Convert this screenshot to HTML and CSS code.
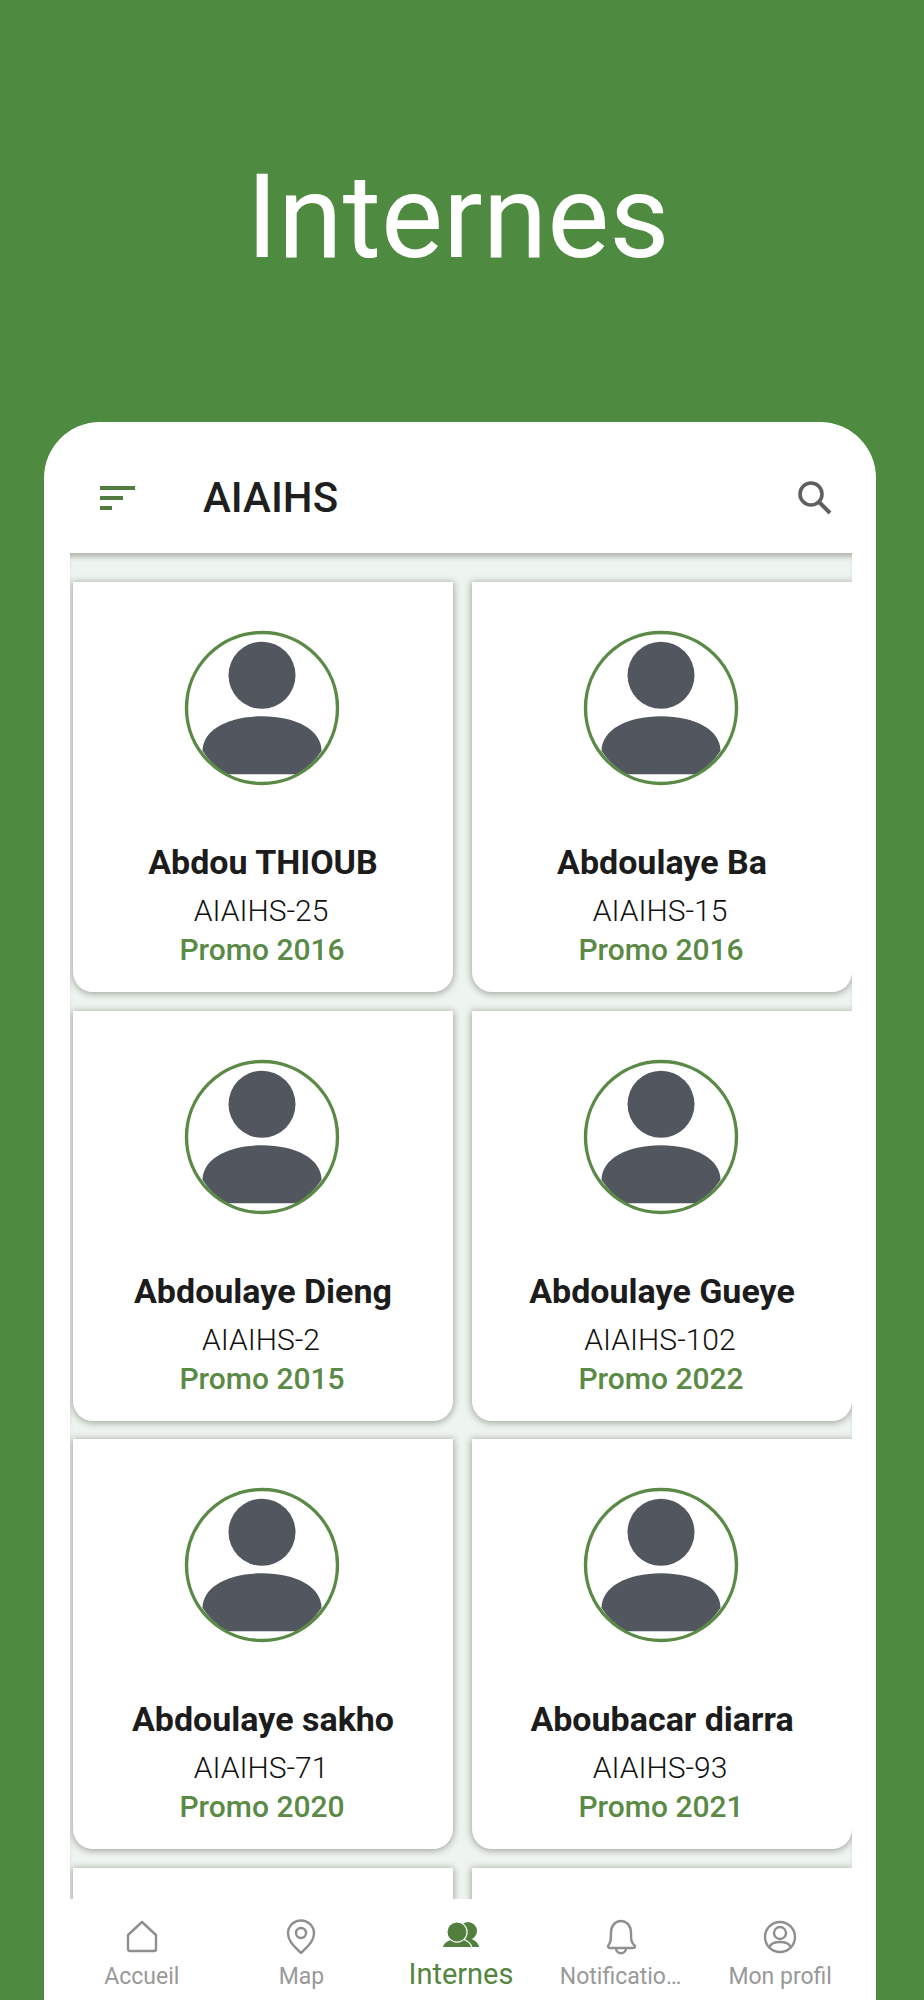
FILE: index.html
```html
<!DOCTYPE html>
<html lang="en">
<head>
    <meta charset="UTF-8">
    <meta name="viewport" content="width=device-width, initial-scale=1.0">
    <title>Internes</title>
    <link rel="stylesheet" href="styles.css">
</head>
<body>
    <svg class="defs" width="0" height="0">
        <symbol id="avatar" viewBox="0 0 156 156">
            <circle cx="78" cy="45.3" r="33.5" fill="#52565e"/>
            <path d="M18.5 121C18.5 100 44 86.3 78 86.3S137.5 100 137.5 121A75 75 0 0 1 113 144.3H43A75 75 0 0 1 18.5 121Z" fill="#52565e"/>
            <circle cx="78" cy="78" r="75.5" fill="none" stroke="#5b8a47" stroke-width="3.4"/>
        </symbol>
    </svg>

    <div class="hero">Internes</div>

    <div class="panel">
        <div class="topbar">
            <svg class="menu-icon" width="36" height="26" viewBox="0 0 36 26">
                <path d="M0 3H35M0 13H23M0 23H12" fill="none" stroke="#527c3f" stroke-width="4"/>
            </svg>
            <div class="topbar-title">AIAIHS</div>
            <svg class="search-icon" width="38" height="38" viewBox="0 0 38 38">
                <circle cx="15" cy="15" r="11" fill="none" stroke="#5f5f5f" stroke-width="3.6"/>
                <path d="M23 23L34 34" fill="none" stroke="#5f5f5f" stroke-width="4"/>
            </svg>
        </div>

        <div class="list">
            <div class="grid">
                <div class="card">
                    <svg class="avatar"><use href="#avatar"/></svg>
                    <div class="name">Abdou THIOUB</div>
                    <div class="code">AIAIHS-25</div>
                    <div class="promo">Promo 2016</div>
                </div>
                <div class="card">
                    <svg class="avatar"><use href="#avatar"/></svg>
                    <div class="name">Abdoulaye Ba</div>
                    <div class="code">AIAIHS-15</div>
                    <div class="promo">Promo 2016</div>
                </div>
                <div class="card">
                    <svg class="avatar"><use href="#avatar"/></svg>
                    <div class="name">Abdoulaye Dieng</div>
                    <div class="code">AIAIHS-2</div>
                    <div class="promo">Promo 2015</div>
                </div>
                <div class="card">
                    <svg class="avatar"><use href="#avatar"/></svg>
                    <div class="name">Abdoulaye Gueye</div>
                    <div class="code">AIAIHS-102</div>
                    <div class="promo">Promo 2022</div>
                </div>
                <div class="card">
                    <svg class="avatar"><use href="#avatar"/></svg>
                    <div class="name">Abdoulaye sakho</div>
                    <div class="code">AIAIHS-71</div>
                    <div class="promo">Promo 2020</div>
                </div>
                <div class="card">
                    <svg class="avatar"><use href="#avatar"/></svg>
                    <div class="name">Aboubacar diarra</div>
                    <div class="code">AIAIHS-93</div>
                    <div class="promo">Promo 2021</div>
                </div>
                <div class="card"></div>
                <div class="card"></div>
            </div>
        </div>

        <div class="nav">
            <div class="nav-item">
                <svg width="36" height="36" viewBox="0 0 36 36">
                    <path d="M4 16L18 3L32 16V30Q32 32 30 32H6Q4 32 4 30Z" fill="none" stroke="#8f8f8f" stroke-width="2.4" stroke-linejoin="round"/>
                </svg>
                <div class="nav-label">Accueil</div>
            </div>
            <div class="nav-item">
                <svg width="36" height="36" viewBox="0 0 36 36">
                    <path d="M18 34C11 27 5 22 5 14.5C5 7 11 1.5 18 1.5S31 7 31 14.5C31 22 25 27 18 34Z" fill="none" stroke="#8f8f8f" stroke-width="2.4" stroke-linejoin="round"/>
                    <circle cx="18" cy="14" r="5" fill="none" stroke="#8f8f8f" stroke-width="2.4"/>
                </svg>
                <div class="nav-label">Map</div>
            </div>
            <div class="nav-item active">
                <svg width="36" height="36" viewBox="0 1 36 36">
                    <circle cx="25" cy="13" r="9" fill="#527f3e"/>
                    <path d="M18 29V21H29C32 23 35 24 36 29Z" fill="#527f3e"/>
                    <g fill="#527f3e" stroke="white" stroke-width="2.4" paint-order="stroke">
                        <path d="M0 29C1 24 6 23 9 21V15H19V21C22 23 27 24 28 29Z"/>
                        <circle cx="14" cy="14" r="9.500"/>
                    </g>
                </svg>
                <div class="nav-label">Internes</div>
            </div>
            <div class="nav-item">
                <svg width="36" height="36" viewBox="0 0 36 36">
                    <path d="M5 27C8 24 8 20 8 14C8 7 12 2 18 2S28 7 28 14C28 20 28 24 32 27Q32 29 30 29H7Q5 29 5 27Z" fill="none" stroke="#8f8f8f" stroke-width="2.4" stroke-linejoin="round"/>
                    <path d="M13 29C13 36 23 36 23 29" fill="none" stroke="#8f8f8f" stroke-width="2.4"/>
                </svg>
                <div class="nav-label">Notificatio…</div>
            </div>
            <div class="nav-item">
                <svg width="36" height="36" viewBox="0 0 36 36">
                    <circle cx="18" cy="18" r="15" fill="none" stroke="#8f8f8f" stroke-width="2.4"/>
                    <circle cx="18" cy="14" r="6" fill="none" stroke="#8f8f8f" stroke-width="2.4"/>
                    <path d="M7.500 28C9 24 13 23 18 23S27 24 28.500 28" fill="none" stroke="#8f8f8f" stroke-width="2.4"/>
                </svg>
                <div class="nav-label">Mon profil</div>
            </div>
        </div>
    </div>
</body>
</html>
```

FILE: styles.css
```css
* {
    margin: 0;
    padding: 0;
    box-sizing: border-box;
    font-family: Roboto, sans-serif;
}

body {
    background: #4e8a40;
    height: 2000px;
    overflow: hidden;
    display: flex;
    flex-direction: column;
}

.defs {
    position: absolute;
}

.hero {
    height: 422px;
    padding: 11px 8px 0 0;
    display: flex;
    align-items: center;
    justify-content: center;
    color: white;
    font-size: 117px;
    font-weight: 400;
}

.panel {
    flex: 1;
    min-height: 0;
    margin: 0 48px 0 44px;
    background: white;
    border-radius: 56px 56px 0 0;
    display: flex;
    flex-direction: column;
    overflow: hidden;
}

.topbar {
    height: 131px;
    flex-shrink: 0;
    padding: 20px 42px 0 56px;
    display: flex;
    align-items: center;
}

.menu-icon {
    margin-right: 67px;
}

.topbar-title {
    flex: 1;
    font-size: 42px;
    font-weight: 500;
    color: #1f1f1f;
}

.list {
    flex: 1;
    min-height: 0;
    margin: 0 24px 0 26px;
    padding: 29px 0 0 3px;
    background: #eef4ef;
    box-shadow: inset 0 6px 5px -2px #b4b7af;
    overflow: hidden;
}

.grid {
    display: grid;
    grid-template-columns: 380px 380px;
    grid-auto-rows: 410px;
    gap: 18.500px 19px;
}

.card {
    background: white;
    border-radius: 0 0 20px 20px;
    box-shadow: 0 1px 7px 1px #a3a79f;
    display: flex;
    flex-direction: column;
    align-items: center;
    padding-top: 48px;
}

.avatar {
    width: 156px;
    height: 156px;
    margin: 0 2px 54px 0;
}

.name {
    font-size: 34px;
    font-weight: 700;
    line-height: 44px;
    color: #1c1c1c;
}

.code {
    font-size: 30px;
    font-weight: 300;
    line-height: 40px;
    margin: 7px 4px 0 0;
    color: #111;
}

.promo {
    font-size: 30px;
    font-weight: 500;
    line-height: 40px;
    margin: -1px 2px 0 0;
    color: #5a8a45;
}

.nav {
    height: 101px;
    flex-shrink: 0;
    padding: 0 16px 0 18px;
    display: flex;
    background: white;
}

.nav-item {
    flex: 1;
    display: flex;
    flex-direction: column;
    align-items: center;
    padding-top: 20px;
    color: #999;
}

.nav-label {
    font-size: 23px;
    line-height: 30px;
    margin-top: 7px;
    white-space: nowrap;
}

.nav-item.active {
    color: #55853f;
}

.nav-item.active .nav-label {
    font-size: 29px;
    margin-top: 4px;
}
```
